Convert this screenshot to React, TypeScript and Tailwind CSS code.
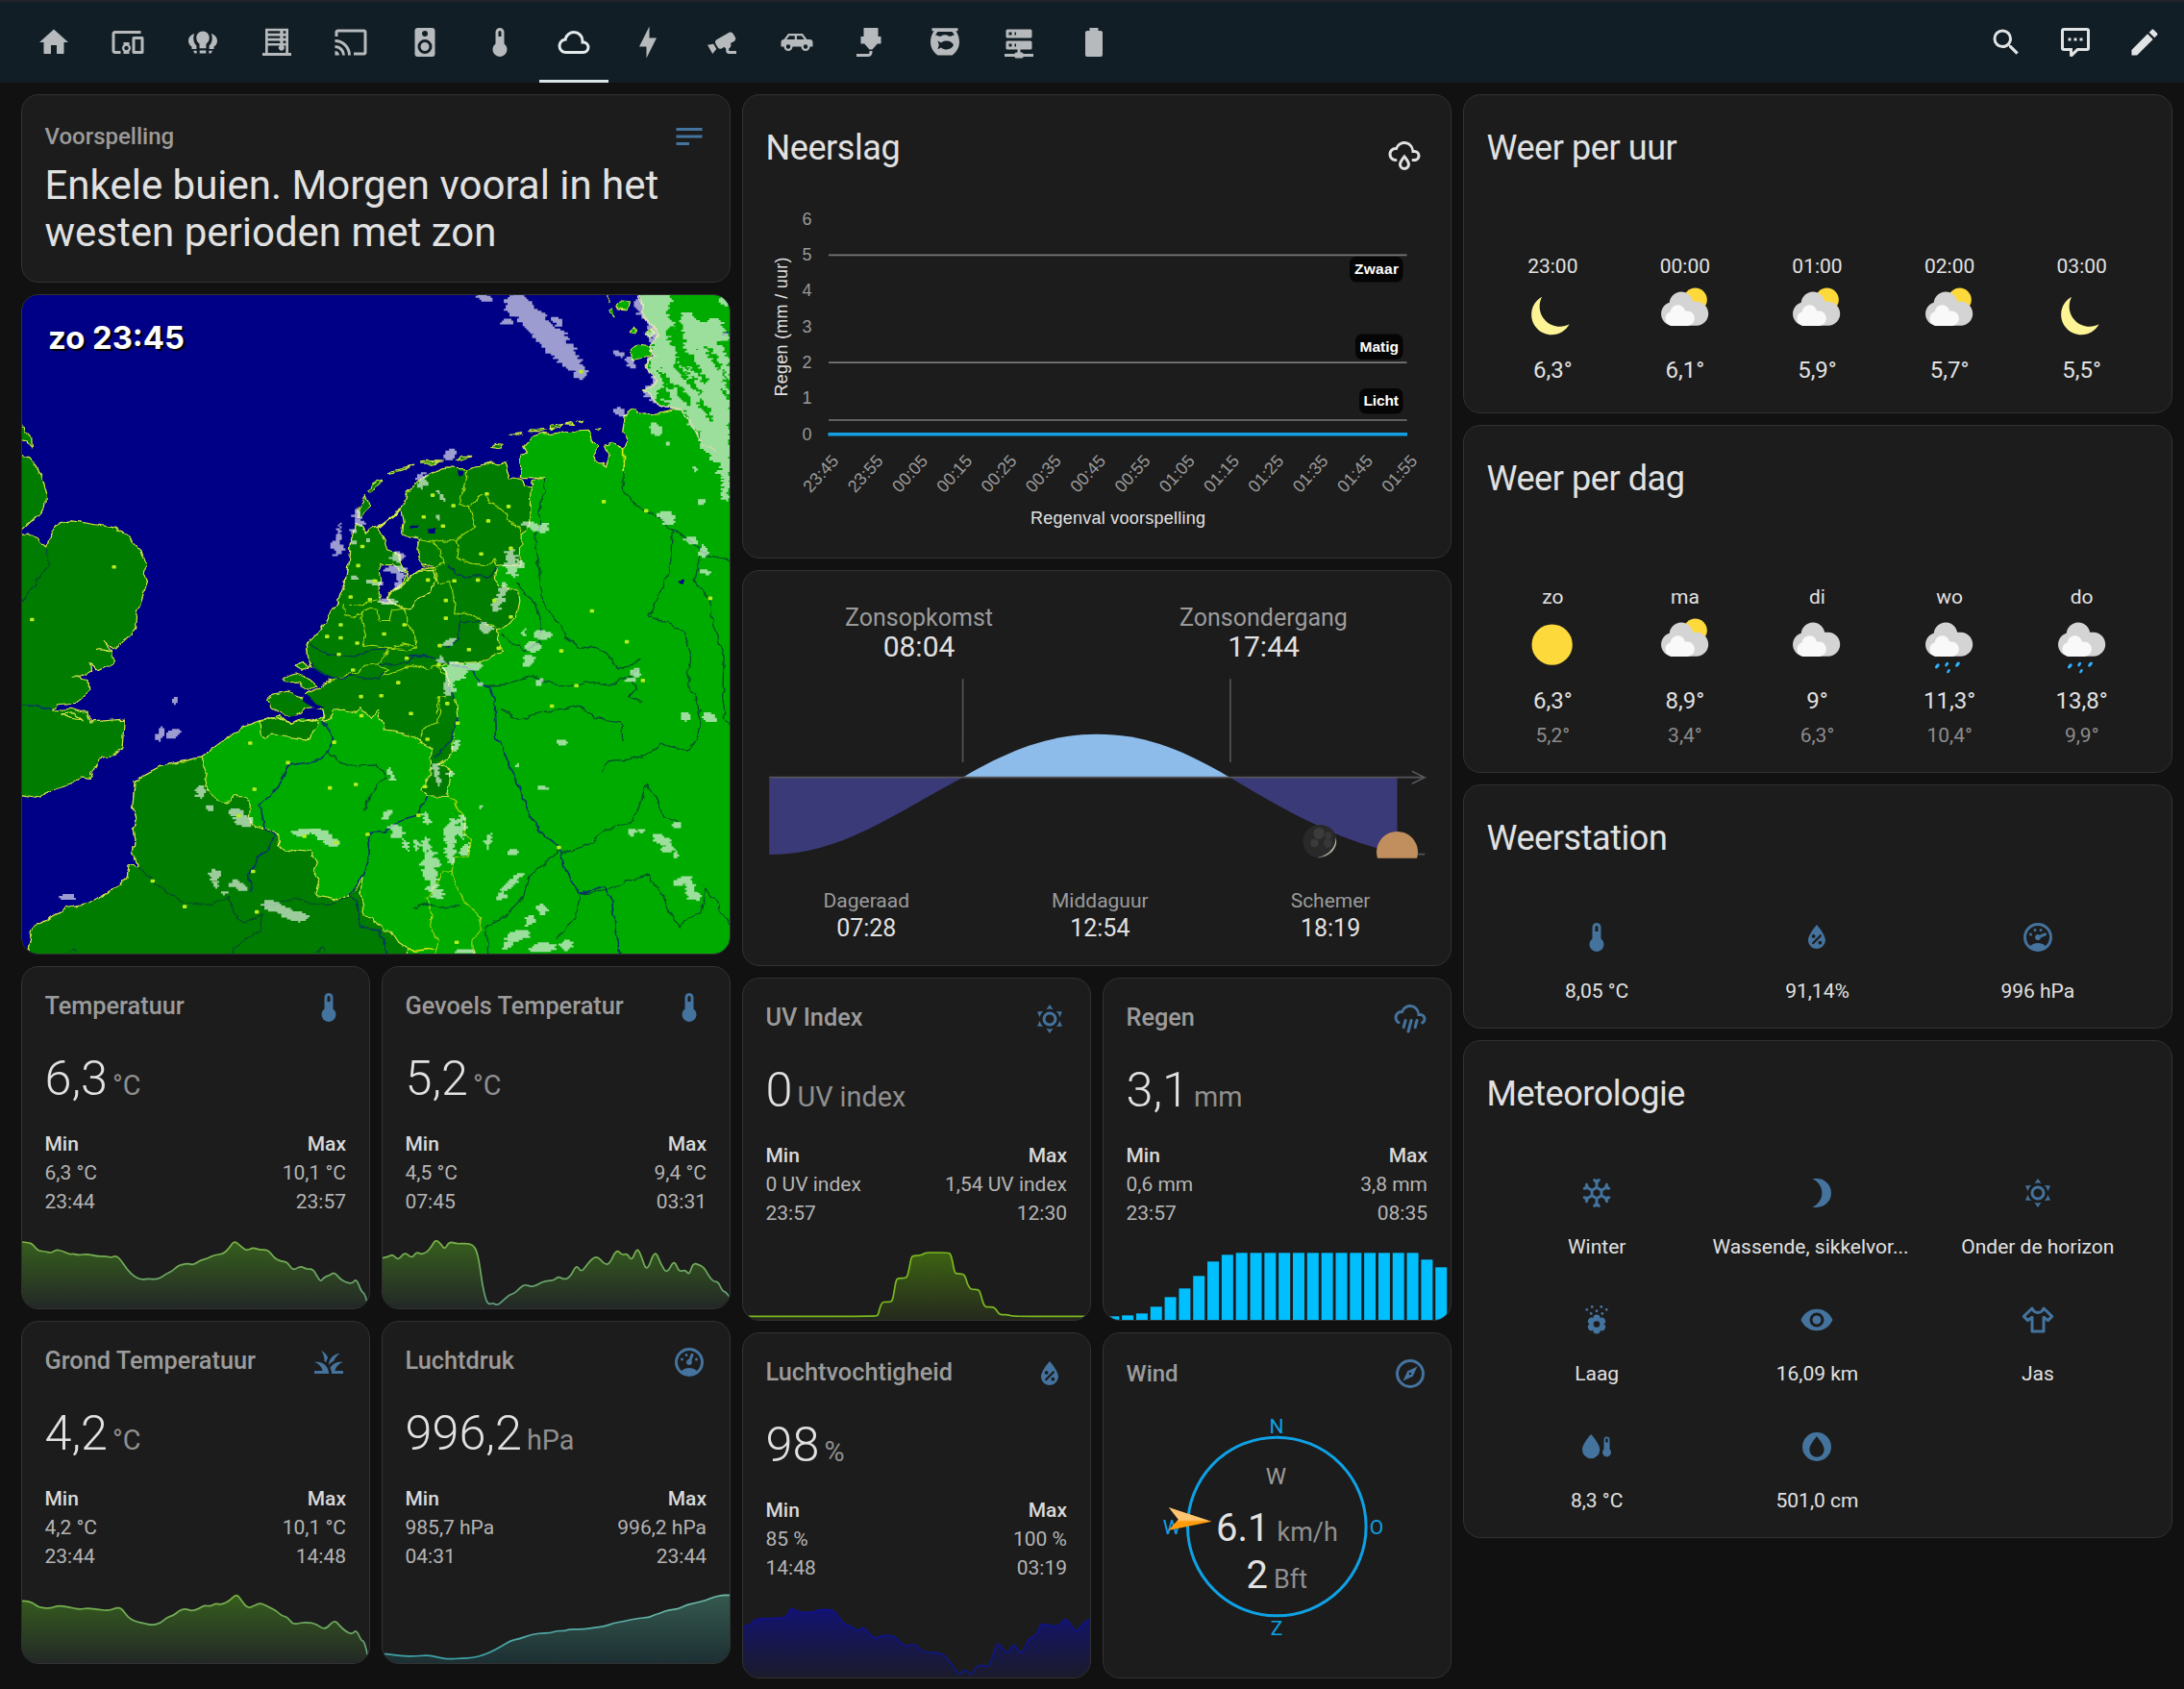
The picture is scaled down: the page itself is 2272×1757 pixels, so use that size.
import React from "react";

type Pt = [number, number];

const I = {
  home: "M10,20V14H14V20H19V12H22L12,3L2,12H5V20H10Z",
  devices:
    "M3 6H21V4H3C1.9 4 1 4.9 1 6V18C1 19.1 1.9 20 3 20H7V18H3V6M13 12H9V13.78C8.39 14.33 8 15.11 8 16C8 16.89 8.39 17.67 9 18.22V20H13V18.22C13.61 17.67 14 16.88 14 16S13.61 14.33 13 13.78V12M11 17.5C10.17 17.5 9.5 16.83 9.5 16S10.17 14.5 11 14.5 12.5 15.17 12.5 16 11.83 17.5 11 17.5M22 8H16C15.5 8 15 8.5 15 9V19C15 19.5 15.5 20 16 20H22C22.5 20 23 19.5 23 19V9C23 8.5 22.5 8 22 8M21 18H17V10H21V18Z",
  bulbs:
    "M12 4.3C9.4 4.3 7.5 6.4 7.5 8.9C7.5 11 8.6 12.3 9.7 13.2V16.2H14.3V13.2C15.4 12.3 16.5 11 16.5 8.9C16.5 6.4 14.6 4.3 12 4.3ZM9.8 17.6H14.2V19.6H9.8ZM6.2 6C3.8 6.7 2 8.6 2 11C2 12.8 2.9 14.2 4.3 15V16.6H7.6V14.4C6.2 13.1 5.5 11 5.5 9.3C5.5 8 5.8 6.8 6.2 6ZM5.4 17.8H7.8V19.6H6.2ZM17.8 6C20.2 6.7 22 8.6 22 11C22 12.8 21.1 14.2 19.7 15V16.6H16.4V14.4C17.8 13.1 18.5 11 18.5 9.3C18.5 8 18.2 6.8 17.8 6ZM18.6 17.8H16.2V19.6H17.8Z",
  blinds:
    "M4 2.5H20V19.3H22V21.3H2V19.3H4ZM5.8 4.2V5.8H14.2V4.2ZM5.8 7.6V9.2H14.2V7.6ZM5.8 11V12.6H14.2V11ZM5.8 14.4V19.3H18.2V14.4H16.4A1.9 1.9 0 1 1 14 14.4ZM16.4 4.2V5.8H18.2V4.2ZM16.4 7.6V9.2H18.2V7.6ZM16.4 11V12.6H18.2V11Z",
  cast: "M1,10V12A9,9 0 0,1 10,21H12C12,14.92 7.07,10 1,10M1,14V16A5,5 0 0,1 6,21H8A7,7 0 0,0 1,14M1,18V21H4A3,3 0 0,0 1,18M21,3H3C1.89,3 1,3.89 1,5V8H3V5H21V19H14V21H21A2,2 0 0,0 23,19V5C23,3.89 22.1,3 21,3Z",
  speaker:
    "M12,12A3,3 0 0,0 9,15A3,3 0 0,0 12,18A3,3 0 0,0 15,15A3,3 0 0,0 12,12M12,20A5,5 0 0,1 7,15A5,5 0 0,1 12,10A5,5 0 0,1 17,15A5,5 0 0,1 12,20M12,4A2,2 0 0,1 14,6A2,2 0 0,1 12,8C10.89,8 10,7.1 10,6C10,4.89 10.89,4 12,4M17,2H7C5.89,2 5,2.89 5,4V20A2,2 0 0,0 7,22H17A2,2 0 0,0 19,20V4C19,2.89 18.1,2 17,2Z",
  thermo: "M15 13V5A3 3 0 0 0 9 5V13A5 5 0 1 0 15 13M12 4A1 1 0 0 1 13 5V8H11V5A1 1 0 0 1 12 4Z",
  cloud:
    "M6.5 20Q4.22 20 2.61 18.43 1 16.85 1 14.58 1 12.63 2.17 11.1 3.35 9.57 5.25 9.15 5.88 6.85 7.75 5.43 9.63 4 12 4 14.93 4 16.96 6.04 19 8.07 19 11 20.73 11.2 21.86 12.5 23 13.78 23 15.5 23 17.38 21.69 18.69 20.38 20 18.5 20M6.5 18H18.5Q19.55 18 20.27 17.27 21 16.55 21 15.5 21 14.45 20.27 13.73 19.55 13 18.5 13H17V11Q17 8.93 15.54 7.46 14.08 6 12 6 9.93 6 8.46 7.46 7 8.93 7 11H6.5Q5.05 11 4.03 12.03 3 13.05 3 14.5 3 15.95 4.03 17 5.05 18 6.5 18Z",
  bolt: "M11 15H6L13 1V9H18L11 23V15Z",
  cctv: "M18.15,4.94C17.77,4.91 17.37,5 17,5.2L8.35,10.2C7.39,10.76 7.07,12 7.62,12.94L9.12,15.53C9.67,16.5 10.89,16.82 11.85,16.27L13.65,15.23C13.92,15.69 14.32,16.06 14.81,16.27V18.04C14.81,19.13 15.7,20 16.81,20H22V18.04H16.81V16.27C17.72,15.87 18.31,14.97 18.31,14C18.31,13.54 18.19,13.11 17.97,12.73L20.5,11.27C21.47,10.71 21.8,9.5 21.24,8.53L19.74,5.94C19.4,5.34 18.79,5 18.15,4.94M6.22,13.17L2,13.87L2.75,15.17L4.75,18.63L5.5,19.93L8.22,16.63L6.22,13.17Z",
  car: "M16,6L19,10H21C22.11,10 23,10.89 23,12V15H21A3,3 0 0,1 18,18A3,3 0 0,1 15,15H9A3,3 0 0,1 6,18A3,3 0 0,1 3,15H1V12C1,10.89 1.89,10 3,10L6,6H16M10.5,7.5H6.75L4.86,10H10.5V7.5M12,7.5V10H17.14L15.25,7.5H12M6,13.5A1.5,1.5 0 0,0 4.5,15A1.5,1.5 0 0,0 6,16.5A1.5,1.5 0 0,0 7.5,15A1.5,1.5 0 0,0 6,13.5M18,13.5A1.5,1.5 0 0,0 16.5,15A1.5,1.5 0 0,0 18,16.5A1.5,1.5 0 0,0 19.5,15A1.5,1.5 0 0,0 18,13.5Z",
  nozzle:
    "M7,2H17V8H19V13H16.5L13,17H11L7.5,13H5V8H7V2M10,22H2V20H10A1,1 0 0,0 11,19V18H13V19A3,3 0 0,1 10,22Z",
  fishbowl:
    "M3 2.2H21V4.2H19.6C21.1 6.2 22 9 22 11.8C22 15.6 20 18.8 17 21H7C4 18.8 2 15.6 2 11.8C2 9 2.9 6.2 4.4 4.2H3ZM7 4.6L5.3 7C7 6.6 7.8 8.6 9.4 7.6C11 6.6 13 6.6 14.6 7.6C16.2 8.6 17 6.6 18.7 7L17 4.6ZM7 11L9.4 12.3C10.4 11.4 11.8 11 13.2 11C15.6 11 17.4 12.4 18 13.9C17.4 15.6 15.6 17 13.2 17C11.8 17 10.4 16.5 9.4 15.6L7 16.9L7.9 13.9Z",
  server:
    "M13,19H14A1,1 0 0,1 15,20H22V22H15A1,1 0 0,1 14,23H10A1,1 0 0,1 9,22H2V20H9A1,1 0 0,1 10,19H11V17H4A1,1 0 0,1 3,16V12A1,1 0 0,1 4,11H20A1,1 0 0,1 21,12V16A1,1 0 0,1 20,17H13V19M4,3H20A1,1 0 0,1 21,4V8A1,1 0 0,1 20,9H4A1,1 0 0,1 3,8V4A1,1 0 0,1 4,3M9,7H10V5H9V7M9,15H10V13H9V15M5,5V7H7V5H5M5,13V15H7V13H5Z",
  battery:
    "M16.67,4H15V2H9V4H7.33A1.33,1.33 0 0,0 6,5.33V20.67C6,21.4 6.6,22 7.33,22H16.67A1.33,1.33 0 0,0 18,20.67V5.33C18,4.6 17.4,4 16.67,4Z",
  search:
    "M9.5,3A6.5,6.5 0 0,1 16,9.5C16,11.11 15.41,12.59 14.44,13.73L14.71,14H15.5L20.5,19L19,20.5L14,15.5V14.71L13.73,14.44C12.59,15.41 11.11,16 9.5,16A6.5,6.5 0 0,1 3,9.5A6.5,6.5 0 0,1 9.5,3M9.5,5C7,5 5,7 5,9.5C5,12 7,14 9.5,14C12,14 14,12 14,9.5C14,7 12,5 9.5,5Z",
  comment:
    "M9,22A1,1 0 0,1 8,21V18H4A2,2 0 0,1 2,16V4C2,2.89 2.9,2 4,2H20A2,2 0 0,1 22,4V16A2,2 0 0,1 20,18H13.9L10.2,21.71C10,21.9 9.75,22 9.5,22H9M10,16V19.08L13.08,16H20V4H4V16H10M17,11H15V9H17V11M13,11H11V9H13V11M9,11H7V9H9V11Z",
  pencil:
    "M20.71,7.04C21.1,6.65 21.1,6 20.71,5.63L18.37,3.29C18,2.9 17.35,2.9 16.96,3.29L15.12,5.12L18.87,8.87M3,17.25V21H6.75L17.81,9.93L14.06,6.18L3,17.25Z",
  text: "M21,6V8H3V6H21M3,18H12V16H3V18M3,13H21V11H3V13Z",
  rainy:
    "M6,14.03A1,1 0 0,1 7,15.03C7,15.58 6.55,16.03 6,16.03C3.24,16.03 1,13.79 1,11.03C1,8.27 3.24,6.03 6,6.03C7,3.68 9.3,2.03 12,2.03C15.43,2.03 18.24,4.69 18.5,8.06L19,8.03A4,4 0 0,1 23,12.03C23,14.23 21.21,16.03 19,16.03H18C17.45,16.03 17,15.58 17,15.03C17,14.47 17.45,14.03 18,14.03H19A2,2 0 0,0 21,12.03A2,2 0 0,0 19,10.03H17V9.03C17,6.27 14.76,4.03 12,4.03C9.5,4.03 7.45,5.84 7.06,8.21C6.73,8.09 6.37,8.03 6,8.03A3,3 0 0,0 3,11.03A3,3 0 0,0 6,14.03M12,14.15C12.18,14.39 12.37,14.66 12.56,14.94C13,15.56 14,17.03 14,18C14,19.11 13.1,20 12,20A2,2 0 0,1 10,18C10,17.03 11,15.56 11.44,14.94C11.63,14.66 11.82,14.4 12,14.15M12,11.03L11.5,11.59C11.5,11.59 10.65,12.55 9.79,13.81C8.93,15.06 8,16.56 8,18A4,4 0 0,0 12,22A4,4 0 0,0 16,18C16,16.56 15.07,15.06 14.21,13.81C13.35,12.55 12.5,11.59 12.5,11.59",
  pouring:
    "M9,12C9.53,12.14 9.85,12.69 9.71,13.22L8.41,18.05C8.27,18.59 7.72,18.9 7.19,18.76C6.65,18.62 6.34,18.07 6.48,17.54L7.78,12.71C7.92,12.17 8.47,11.86 9,12M13,12C13.53,12.14 13.85,12.69 13.71,13.22L11.64,20.95C11.5,21.5 10.95,21.8 10.41,21.66C9.88,21.5 9.56,20.97 9.7,20.43L11.78,12.71C11.92,12.17 12.47,11.86 13,12M17,12C17.53,12.14 17.85,12.69 17.71,13.22L16.41,18.05C16.27,18.59 15.72,18.9 15.19,18.76C14.65,18.62 14.34,18.07 14.48,17.54L15.78,12.71C15.92,12.17 16.47,11.86 17,12M17,10V9A5,5 0 0,0 12,4C9.5,4 7.45,5.82 7.06,8.19C6.73,8.07 6.37,8 6,8A3,3 0 0,0 3,11C3,12.11 3.6,13.08 4.5,13.6V13.59C5,13.87 5.14,14.5 4.87,14.96C4.59,15.43 4,15.6 3.5,15.32V15.33C2,14.47 1,12.85 1,11A5,5 0 0,1 6,6C7,3.65 9.3,2 12,2C15.43,2 18.24,4.66 18.5,8.03L19,8A4,4 0 0,1 23,12C23,13.5 22.2,14.77 21,15.46C20.5,15.73 19.91,15.57 19.63,15.09C19.36,14.61 19.5,14 20,13.72V13.73C20.6,13.39 21,12.74 21,12A2,2 0 0,0 19,10H17Z",
  sunny:
    "M12,7A5,5 0 0,1 17,12A5,5 0 0,1 12,17A5,5 0 0,1 7,12A5,5 0 0,1 12,7M12,9A3,3 0 0,0 9,12A3,3 0 0,0 12,15A3,3 0 0,0 15,12A3,3 0 0,0 12,9M12,2L14.39,5.42C13.65,5.15 12.84,5 12,5C11.16,5 10.35,5.15 9.61,5.42L12,2M3.34,7L7.5,6.65C6.9,7.16 6.36,7.78 5.94,8.5C5.5,9.24 5.25,10 5.11,10.79L3.34,7M3.36,17L5.12,13.23C5.26,14 5.53,14.78 5.95,15.5C6.37,16.24 6.91,16.86 7.5,17.37L3.36,17M20.65,7L18.88,10.79C18.74,10 18.47,9.23 18.05,8.5C17.63,7.78 17.1,7.15 16.5,6.64L20.65,7M20.64,17L16.5,17.36C17.09,16.85 17.62,16.22 18.04,15.5C18.46,14.77 18.73,14 18.87,13.21L20.64,17M12,22L9.59,18.56C10.33,18.83 11.14,19 12,19C12.82,19 13.63,18.83 14.37,18.56L12,22Z",
  grass:
    "M12 20H2V18H7.75C7 15.19 4.81 12.9 2 12.04C2.62 11.87 3.3 11.77 4 11.77C8.42 11.77 12 15.35 12 19.77V20M22 12.04C21.39 11.87 20.71 11.77 20 11.77C16.93 11.77 14.26 13.5 12.92 16C13.64 17.26 14 18.6 14 19.77V20H22V18H16.25C17 15.19 19.19 12.9 22 12.04M15.64 11C16.42 8.93 17.87 7.18 19.73 6C15.44 6.16 12 9.67 12 14C12.95 12.75 14.2 11.72 15.64 11M11.42 8.85C10.58 6.66 8.88 4.89 6.7 4C8.14 5.86 9 8.18 9 10.71C9 10.92 8.97 11.12 8.96 11.32C9.39 11.56 9.79 11.84 10.18 12.14C10.39 10.96 10.83 9.85 11.42 8.85Z",
  gauge:
    "M12,2A10,10 0 0,0 2,12A10,10 0 0,0 12,22A10,10 0 0,0 22,12A10,10 0 0,0 12,2M12,4A8,8 0 0,1 20,12C20,14.4 19,16.5 17.3,18C15.9,16.7 14,16 12,16C10,16 8.2,16.7 6.7,18C5,16.5 4,14.4 4,12A8,8 0 0,1 12,4M14,5.89C13.62,5.9 13.26,6.15 13.1,6.54L11.81,9.77L11.71,10C11,10.13 10.41,10.6 10.14,11.26C9.73,12.29 10.23,13.45 11.26,13.86C12.29,14.27 13.45,13.77 13.86,12.74C14.12,12.08 14,11.32 13.57,10.76L13.67,10.5L14.96,7.29L14.97,7.26C15.17,6.75 14.92,6.17 14.41,5.96C14.28,5.91 14.15,5.89 14,5.89M10,6A1,1 0 0,0 9,7A1,1 0 0,0 10,8A1,1 0 0,0 11,7A1,1 0 0,0 10,6M7,9A1,1 0 0,0 6,10A1,1 0 0,0 7,11A1,1 0 0,0 8,10A1,1 0 0,0 7,9M17,9A1,1 0 0,0 16,10A1,1 0 0,0 17,11A1,1 0 0,0 18,10A1,1 0 0,0 17,9Z",
  gaugeRight:
    "M12,2A10,10 0 0,0 2,12A10,10 0 0,0 12,22A10,10 0 0,0 22,12A10,10 0 0,0 12,2M12,4A8,8 0 0,1 20,12C20,14.4 19,16.5 17.3,18C15.9,16.7 14,16 12,16C10,16 8.2,16.7 6.7,18C5,16.5 4,14.4 4,12A8,8 0 0,1 12,4M10,6A1,1 0 0,0 9,7A1,1 0 0,0 10,8A1,1 0 0,0 11,7A1,1 0 0,0 10,6M14,6A1,1 0 0,0 13,7A1,1 0 0,0 14,8A1,1 0 0,0 15,7A1,1 0 0,0 14,6M17.09,8.94C16.96,8.94 16.84,8.97 16.7,9L13.5,10.32L13.23,10.43C12.67,10 11.91,9.88 11.25,10.15C10.23,10.56 9.73,11.73 10.15,12.75C10.56,13.77 11.73,14.27 12.75,13.85C13.41,13.59 13.88,13 14,12.28L14.23,12.18L17.45,10.88L17.47,10.87C18,10.66 18.23,10.08 18.03,9.56C17.87,9.18 17.5,8.93 17.09,8.94M7,9A1,1 0 0,0 6,10A1,1 0 0,0 7,11A1,1 0 0,0 8,10A1,1 0 0,0 7,9Z",
  waterPercent:
    "M12,3.25C12,3.25 6,10 6,14C6,17.32 8.69,20 12,20A6,6 0 0,0 18,14C18,10 12,3.25 12,3.25M14.47,9.97L15.53,11.03L9.53,17.03L8.47,15.97M9.75,10A1.25,1.25 0 0,1 11,11.25A1.25,1.25 0 0,1 9.75,12.5A1.25,1.25 0 0,1 8.5,11.25A1.25,1.25 0 0,1 9.75,10M14.25,14.5A1.25,1.25 0 0,1 15.5,15.75A1.25,1.25 0 0,1 14.25,17A1.25,1.25 0 0,1 13,15.75A1.25,1.25 0 0,1 14.25,14.5Z",
  compass:
    "M7,17L10.2,10.2L17,7L13.8,13.8L7,17M12,11.1A0.9,0.9 0 0,0 11.1,12A0.9,0.9 0 0,0 12,12.9A0.9,0.9 0 0,0 12.9,12A0.9,0.9 0 0,0 12,11.1M12,2A10,10 0 0,1 22,12A10,10 0 0,1 12,22A10,10 0 0,1 2,12A10,10 0 0,1 12,2M12,4A8,8 0 0,0 4,12A8,8 0 0,0 12,20A8,8 0 0,0 20,12A8,8 0 0,0 12,4Z",
  crescent: "M9 2.2C10 2 11 2 12 2A10 10 0 0 1 12 22C11 22 10 22 9 21.8C13 20 15.6 16.3 15.6 12S13 4 9 2.2Z",
  eye: "M12,9A3,3 0 0,0 9,12A3,3 0 0,0 12,15A3,3 0 0,0 15,12A3,3 0 0,0 12,9M12,17A5,5 0 0,1 7,12A5,5 0 0,1 12,7A5,5 0 0,1 17,12A5,5 0 0,1 12,17M12,4.5C7,4.5 2.73,7.61 1,12C2.73,16.39 7,19.5 12,19.5C17,19.5 21.27,16.39 23,12C21.27,7.61 17,4.5 12,4.5Z",
  waterThermo:
    "M8.1 3.3C8.1 3.3 2 9.7 2 14A6.1 6.1 0 0 0 14.2 14C14.2 9.7 8.1 3.3 8.1 3.3ZM21 13.7V7A2 2 0 0 0 17 7V13.7A3 3 0 1 0 21 13.7ZM19 6.2A.8 .8 0 0 1 19.8 7V9H18.2V7A.8 .8 0 0 1 19 6.2Z",
  waterCircle:
    "M12 2A10 10 0 1 0 12 22A10 10 0 1 0 12 2ZM12 4.8C12 4.8 17.1 10.3 17.1 14A5.1 5.1 0 0 1 6.9 14C6.9 10.3 12 4.8 12 4.8Z",
};

function Icon({ d, className = "" }: { d: string; className?: string }) {
  return (
    <svg viewBox="0 0 24 24" className={`size-9 shrink-0 fill-current ${className}`}>
      <path d={d} fillRule="evenodd" />
    </svg>
  );
}

function Snowflake() {
  return (
    <svg viewBox="0 0 24 24" className="size-9 fill-none stroke-current" strokeWidth="1.9" strokeLinecap="round">
      {[0, 60, 120, 180, 240, 300].map((a) => (
        <path key={a} transform={`rotate(${a} 12 12)`} d="M12 8.2V3.4M10.4 3L12 4.8L13.6 3M12 8.2L15.3 10.1" />
      ))}
    </svg>
  );
}

function Pollen() {
  const dots: Pt[] = [[5.2, 4.9], [8.8, 3], [15.2, 3], [18.8, 4.9], [12, 5.8], [8.1, 7.6], [15.9, 7.6]];
  return (
    <svg viewBox="0 0 24 24" className="size-9 fill-current">
      {dots.map(([x, y]) => (
        <circle key={`${x}-${y}`} cx={x} cy={y} r="0.95" />
      ))}
      {[0, 60, 120, 180, 240, 300].map((a) => (
        <circle key={a} cx="12" cy="10.9" r="2.5" transform={`rotate(${a} 12 15)`} />
      ))}
      <circle cx="12" cy="15" r="4.2" />
      <circle cx="12" cy="15" r="2.2" className="fill-[#1c1c1c]" />
    </svg>
  );
}

function Shirt() {
  return (
    <svg viewBox="0 0 24 24" className="size-9 fill-none stroke-current" strokeWidth="2" strokeLinejoin="round">
      <path d="M8 4L2.2 9.6L5 12.4L8 10.2V20H16V10.2L19 12.4L21.8 9.6L16 4C15.2 6 13.8 7 12 7S8.8 6 8 4Z" />
    </svg>
  );
}

const CLOUD_BACK =
  "m3.8863 5.035c-0.54892 0.16898-1.04 0.46637-1.4372 0.8636-0.63077 0.63041-1.0206 1.4933-1.0206 2.455 0 1.9251 1.5589 3.4682 3.4837 3.4682h6.9688c1.9251 0 3.484-1.5981 3.484-3.5232 0-1.9251-1.5589-3.5232-3.484-3.5232h-1.0834c-0.25294-1.6916-1.6986-2.9083-3.4463-2.9083-1.7995 0-3.2805 1.4153-3.465 3.1679";
const CLOUD_FRONT =
  "m4.1996 7.6995c-0.33902 0.10407-0.64276 0.28787-0.88794 0.5334-0.39017 0.38982-0.63147 0.92322-0.63147 1.5176 0 1.1896 0.96414 2.1431 2.1537 2.1431h4.3071c1.1896 0 2.153-0.98742 2.153-2.1777 0-1.1896-0.96344-2.1777-2.153-2.1777h-0.66992c-0.15593-1.0449-1.0499-1.7974-2.1297-1.7974-1.112 0-2.0274 0.87524-2.1417 1.9586";
const MOON =
  "m 13.502891,11.382935 c -1.011285,1.859223 -2.976664,3.121381 -5.2405751,3.121381 -3.289929,0 -5.953329,-2.663833 -5.953329,-5.9537625 0,-2.263911 1.261724,-4.228856 3.120948,-5.240575 -0.452782,0.842738 -0.712753,1.806363 -0.712753,2.832381 0,3.289928 2.663833,5.9533275 5.9533291,5.9533275 1.026017,0 1.989641,-0.259969 2.83238,-0.712752";

function Weather({ kind }: { kind: string }) {
  const cloudy = kind === "partly" || kind === "cloudy" || kind === "rain";
  const drops: [number, number, number][] = [[4.9, 14.7, 1], [7.7, 14.2, 0.85], [10.9, 14.2, 1], [8.2, 16.2, 0.8]];
  return (
    <svg viewBox="0 0 17 17" className="size-[60px]">
      {kind === "moon" && <path d={MOON} className="fill-[#fdf495]" />}
      {kind === "sun" && <circle cx="8.4" cy="8.4" r="6" className="fill-[#fdd93c]" />}
      {kind === "partly" && <circle cx="11.5" cy="4.2" r="3.48" className="fill-[#fdd93c]" />}
      {cloudy && <path d={CLOUD_BACK} className="fill-[#d4d4d4]" />}
      {cloudy && <path d={CLOUD_FRONT} className="fill-[#f9f9f9]" />}
      {kind === "rain" &&
        drops.map(([x, y, s]) => (
          <ellipse key={x} cx="0" cy="0" rx="0.48" ry="0.85" className="fill-[#30b3ff]" transform={`translate(${x} ${y}) rotate(35) scale(${s})`} />
        ))}
    </svg>
  );
}

function Card({ className = "", children }: { className?: string; children?: React.ReactNode }) {
  return (
    <div className={`overflow-hidden rounded-[18px] border border-[#323232] bg-[#1c1c1c] ${className}`}>{children}</div>
  );
}

/** Rounds the corners of a polyline by running quadratics through the midpoints. */
function smooth(p: Pt[]) {
  let d = `M${p[0][0]},${p[0][1]}`;
  for (let i = 1; i < p.length - 1; i++) {
    d += ` Q${p[i][0]},${p[i][1]} ${(p[i][0] + p[i + 1][0]) / 2},${(p[i][1] + p[i + 1][1]) / 2}`;
  }
  const l = p[p.length - 1];
  return `${d} L${l[0]},${l[1]}`;
}

function parse(s: string): Pt[] {
  return s.split(" ").map((q) => q.split(",").map(Number) as Pt);
}

type Graph = { box: [number, number, number, number]; pts: string; stroke: [string, string]; fill: [string, string] };

function Spark({ id, graph }: { id: string; graph: Graph }) {
  const [x, y, w, h] = graph.box;
  const pts = parse(graph.pts);
  const line = smooth(pts);
  const top = Math.min(...pts.map((q) => q[1]));
  return (
    <svg viewBox={`${x} ${y} ${w} ${h}`} preserveAspectRatio="none" className="mt-auto block h-24 w-full">
      <defs>
        <linearGradient id={`${id}s`} gradientUnits="userSpaceOnUse" x1="0" x2="0" y1={top} y2={y + h}>
          <stop offset="0" stopColor={graph.stroke[0]} />
          <stop offset="1" stopColor={graph.stroke[1]} />
        </linearGradient>
        <linearGradient id={`${id}f`} gradientUnits="userSpaceOnUse" x1="0" x2="0" y1={top} y2={y + h}>
          <stop offset="0" stopColor={graph.fill[0]} />
          <stop offset="1" stopColor={graph.fill[1]} />
        </linearGradient>
      </defs>
      <path d={`${line} L${x + w},${y + h} L${x},${y + h} Z`} fill={`url(#${id}f)`} />
      <path d={line} fill="none" stroke={`url(#${id}s)`} strokeWidth="1.7" vectorEffect="non-scaling-stroke" />
    </svg>
  );
}

function Bars() {
  const tops = [1080, 1077, 1071, 1050, 1020, 993, 954, 909, 888, ...Array(13).fill(882), 903, 927];
  return (
    <svg viewBox="793 803 754 288" preserveAspectRatio="none" className="mt-auto block h-24 w-full">
      {tops.map((t, i) => (
        <rect key={i} x={802 + 30.96 * i} y={t} width="25" height={1091 - t} className="fill-[#00bfff]" />
      ))}
    </svg>
  );
}

type SensorProps = {
  id: string; title: string; icon: string; value: string; unit: string;
  min: [string, string]; max: [string, string]; graph?: Graph; h?: string;
};

function Sensor({ id, title, icon, value, unit, min, max, graph, h = "h-[357px]" }: SensorProps) {
  return (
    <Card className={`flex flex-col pt-[23px] ${h}`}>
      <div className="flex h-9 items-center justify-between pl-[23.5px] pr-6">
        <span className="text-[25.3px] font-medium leading-9 text-[#9b9b9b]">{title}</span>
        <Icon d={icon} className="mt-0.5 text-[#44739e]" />
      </div>
      <div className="mt-[27px] flex h-[60px] items-baseline pl-[23.5px] pr-6">
        <span className="text-[50.4px] font-light leading-[60px] text-[#e1e1e1]">{value}</span>
        <span className="ml-[5px] text-[28.8px] text-[#8f8f8f]">{unit}</span>
      </div>
      <div className="mt-[23px] flex justify-between pl-[23.5px] pr-6 text-[21px] leading-[30px] text-[#b4b4b4]">
        <div>
          <p className="font-medium text-[#d9d9d9]">Min</p>
          <p>{min[0]}</p>
          <p>{min[1]}</p>
        </div>
        <div className="text-right">
          <p className="font-medium text-[#d9d9d9]">Max</p>
          <p>{max[0]}</p>
          <p>{max[1]}</p>
        </div>
      </div>
      {graph ? <Spark id={id} graph={graph} /> : <Bars />}
    </Card>
  );
}

const GREEN: { stroke: [string, string]; fill: [string, string] } = {
  stroke: ["#7cb342", "#5f9d86"],
  fill: ["#365f1d", "#232826"],
};

const sensors: Record<string, SensorProps> = {
  temp: {
    id: "temp", title: "Temperatuur", icon: I.thermo, value: "6,3", unit: "°C", min: ["6,3 °C", "23:44"], max: ["10,1 °C", "23:57"],
    graph: {
      ...GREEN, box: [46, 797, 738, 288],
      pts: "46,878 60,880 68,884 80,906 95,907 107,913 118,902 130,905 148,917 155,914 165,919 185,915 205,923 225,922 235,927 245,921 254,930 270,965 285,987 300,996 315,992 325,995 340,991 352,977 365,969 375,955 385,948 400,945 410,950 425,935 440,930 455,918 473,916 485,900 497,874 508,887 523,906 537,895 550,902 570,903 582,928 595,938 610,940 622,968 638,952 652,964 665,961 680,1004 688,988 700,982 710,972 722,993 735,1004 748,1008 757,992 767,1032 775,1040 782,1080",
    },
  },
  feels: {
    id: "feels", title: "Gevoels Temperatur", icon: I.thermo, value: "5,2", unit: "°C", min: ["4,5 °C", "07:45"], max: ["9,4 °C", "03:31"],
    graph: {
      ...GREEN, box: [808, 797, 738, 288],
      pts: "808,928 820,924 830,916 841,936 855,908 870,930 880,908 890,917 902,910 912,892 921,870 932,884 940,902 950,876 965,884 985,882 1000,886 1008,905 1014,945 1020,1010 1028,1062 1035,1073 1043,1068 1052,1076 1065,1060 1078,1042 1090,1038 1100,1020 1112,1010 1122,1018 1135,1014 1148,1002 1160,999 1172,998 1182,985 1194,996 1208,986 1220,948 1230,972 1240,955 1252,932 1265,922 1277,944 1290,950 1305,900 1318,920 1328,913 1338,938 1349,895 1358,920 1370,974 1387,900 1400,948 1413,978 1428,932 1438,972 1452,964 1460,982 1468,944 1480,948 1492,958 1502,985 1512,1002 1522,1002 1530,1030 1538,1034 1546,1050",
    },
  },
  ground: {
    id: "ground", title: "Grond Temperatuur", icon: I.grass, value: "4,2", unit: "°C", min: ["4,2 °C", "23:44"], max: ["10,1 °C", "14:48"],
    graph: {
      ...GREEN, box: [46, 794, 738, 288],
      pts: "46,888 65,889 80,908 105,912 122,902 145,907 168,915 185,910 210,916 232,918 245,910 257,910 270,938 285,952 305,958 322,964 340,958 355,938 368,934 380,918 393,912 407,920 422,912 433,902 447,905 457,896 470,900 487,888 502,866 512,885 525,912 540,902 553,894 572,908 588,920 598,935 610,938 622,962 640,956 655,955 672,960 690,980 710,946 722,967 735,984 748,992 757,978 767,1012 774,1015 781,1060",
    },
  },
  pressure: {
    id: "pressure", title: "Luchtdruk", icon: I.gauge, value: "996,2", unit: "hPa", min: ["985,7 hPa", "04:31"], max: ["996,2 hPa", "23:44"],
    graph: {
      stroke: ["#6fb8a4", "#3aa0a8"], fill: ["#35594e", "#1d2f33"], box: [808, 794, 738, 288],
      pts: "812,1053 840,1058 870,1062 905,1057 930,1066 950,1070 975,1067 1000,1066 1025,1056 1045,1042 1060,1030 1080,1012 1100,1006 1120,995 1140,989 1165,988 1180,981 1195,982 1205,976 1235,977 1255,972 1280,968 1300,957 1320,952 1350,942 1375,940 1385,932 1400,926 1415,916 1435,914 1455,900 1475,894 1495,886 1510,877 1530,870 1546,870",
    },
  },
  uv: {
    id: "uv", title: "UV Index", icon: I.sunny, value: "0", unit: "UV index", min: ["0 UV index", "23:57"], max: ["1,54 UV index", "12:30"],
    graph: {
      stroke: ["#7cb820", "#7cb820"], fill: ["#3d6312", "#25291d"], box: [15, 803, 753, 288],
      pts: "15,1080 150,1080 275,1080 304,1079 308,1076 312,1052 317,1036 322,1035 334,1035 339,1031 342,1010 347,966 352,961 366,961 371,957 375,935 380,895 385,891 400,890 406,886 412,881 430,881 458,881 465,884 469,905 474,944 479,947 492,948 497,954 502,980 508,994 513,996 524,996 529,1002 534,1030 539,1049 545,1051 558,1051 564,1058 570,1073 578,1075 590,1075 600,1080 680,1080 768,1080",
    },
  },
  rain: {
    id: "rain", title: "Regen", icon: I.pouring, value: "3,1", unit: "mm", min: ["0,6 mm", "23:57"], max: ["3,8 mm", "08:35"],
  },
  humid: {
    id: "humid", title: "Luchtvochtigheid", icon: I.waterPercent, value: "98", unit: "%", min: ["85 %", "14:48"], max: ["100 %", "03:19"],
    h: "h-[360px]",
    graph: {
      stroke: ["#10108e", "#0c1a80"], fill: ["#121272", "#1b1b2c"], box: [15, 810, 753, 288],
      pts: "15,940 28,938 40,918 50,914 105,914 112,900 121,878 132,895 170,895 176,886 208,886 215,895 225,915 237,936 250,937 262,955 275,940 288,960 302,980 312,967 343,967 355,988 370,1003 385,990 405,1020 448,1022 458,1040 470,1062 484,1092 497,1070 510,1094 520,1066 530,1058 548,1067 558,1025 567,986 577,1008 590,1026 602,988 616,1024 625,1012 635,975 650,970 662,926 680,938 702,937 714,910 728,938 739,958 750,932 768,916",
    },
  },
};

function Tabs() {
  const tabs = [I.home, I.devices, I.bulbs, I.blinds, I.cast, I.speaker, I.thermo, I.cloud, I.bolt, I.cctv, I.car, I.nozzle, I.fishbowl, I.server, I.battery];
  return (
    <header className="flex h-[86px] items-stretch justify-between border-t-2 border-[#23232b] bg-[#121e25] pl-[17.4px] pr-[5px]">
      <nav className="flex">
        {tabs.map((d, i) => (
          <div key={i} className="relative flex w-[77.25px] items-center justify-center text-[#b6babc]">
            <Icon d={d} className={i === 7 ? "text-[#e3eaec]" : ""} />
            {i === 7 && <div className="absolute bottom-0 h-[3px] w-[72px] bg-[#dbe5e8]" />}
          </div>
        ))}
      </nav>
      <div className="flex items-center text-[#e1e4e5]">
        {[I.search, I.comment, I.pencil].map((d) => (
          <div key={d} className="flex w-[72px] justify-center">
            <Icon d={d} />
          </div>
        ))}
      </div>
    </header>
  );
}

/** Row-by-row outline of a radar echo, with uneven row ends; the seed keeps each one stable. */
function echo(cx: number, cy: number, rx: number, ry: number, rot: number, seed: number) {
  let s = seed * 9301 + 49297;
  const rnd = () => {
    s = (s * 9301 + 49297) % 233280;
    return s / 233280;
  };
  rnd();
  const a = (rot * Math.PI) / 180;
  const c = Math.cos(a);
  const n = Math.sin(a);
  const A = (c * c) / (rx * rx) + (n * n) / (ry * ry);
  const B = c * n * (1 / (rx * rx) - 1 / (ry * ry));
  const C = (n * n) / (rx * rx) + (c * c) / (ry * ry);
  const top = Math.sqrt(A / (A * C - B * B));
  const step = 4.4;
  const jag = Math.min(15, 4 + (rx + ry) / 4);
  let d = "";
  let l = 0;
  let r = 0;
  for (let y = -top; y < top; y += step) {
    const m = y + step / 2;
    const disc = B * B * m * m - A * (C * m * m - 1);
    if (disc < 0) continue;
    const mid = (-B * m) / A;
    const half = Math.sqrt(disc) / A;
    l = l * 0.45 + (rnd() - 0.5) * jag;
    r = r * 0.45 + (rnd() - 0.5) * jag;
    const x0 = Math.round((cx + mid - half + l) / 4) * 4;
    const x1 = Math.max(x0 + 4, Math.round((cx + mid + half + r) / 4) * 4);
    d += `M${x0},${(cy + y).toFixed(1)}H${x1}v${step + 0.3}H${x0}Z`;
  }
  return d;
}

type Echo = [number, number, number, number, number];

const ECHOES: Echo[] = [
  [1025, 43, 22, 8, 10], [1098, 60, 28, 26, 40], [1130, 95, 45, 26, 55], [1165, 135, 45, 28, 50], [1200, 175, 42, 24, 48], [1230, 212, 22, 12, 60], [1075, 98, 12, 7, 0], [1180, 98, 14, 8, 40],
  [1314, 172, 12, 6, 30], [1338, 192, 8, 14, -20], [1314, 305, 14, 9, 40], [953, 403, 9, 14, 30], [895, 464, 7, 20, 0], [934, 498, 7, 13, -20], [930, 548, 6, 6, 0],
  [717, 580, 6, 20, 0], [714, 615, 12, 22, 0], [758, 540, 11, 11, 0], [762, 560, 12, 8, 20], [750, 580, 6, 5, 0], [778, 600, 7, 4, 0], [748, 606, 5, 5, 0],
  [845, 640, 15, 14, 0], [840, 668, 22, 9, 0], [848, 695, 10, 20, 10], [790, 697, 18, 5, 10], [820, 742, 18, 7, 0], [752, 686, 7, 4, 0],
  [1135, 570, 26, 9, 20], [1155, 572, 8, 12, 30], [1084, 655, 13, 34, -5], [1105, 655, 12, 8, 0], [1068, 712, 10, 16, 20], [1055, 745, 10, 22, 25], [1025, 802, 16, 13, 20],
  [950, 835, 15, 7, -30], [935, 874, 7, 9, 0], [966, 902, 24, 23, 0], [1000, 892, 24, 9, -10], [950, 938, 13, 20, 10], [1015, 932, 6, 5, 0],
  [1148, 818, 18, 11, 0], [1130, 845, 14, 12, 30], [1120, 878, 10, 14, 20], [1111, 812, 5, 9, 0], [1145, 926, 12, 7, -30], [1350, 905, 11, 11, 30], [1340, 922, 11, 5, 0],
  [1413, 550, 16, 16, 20], [1465, 602, 15, 9, 20], [1492, 625, 9, 16, -20], [1495, 674, 14, 6, 10], [1474, 437, 4, 6, 0], [1488, 512, 8, 6, 0], [1388, 345, 18, 10, 50], [1416, 378, 5, 4, 0],
  [1452, 1006, 11, 10, 0], [1505, 1008, 16, 8, 40], [1190, 1066, 8, 7, 0], [1150, 1170, 14, 5, 0], [1098, 1118, 5, 5, 0], [1020, 1214, 5, 4, 0], [966, 1074, 6, 15, 20],
  [924, 1140, 7, 26, 0], [955, 1137, 10, 6, 0], [828, 1138, 6, 16, -10], [904, 1240, 6, 16, -10], [822, 1232, 6, 13, 30], [842, 1270, 16, 16, 10], [858, 1302, 7, 17, -20], [880, 1302, 7, 13, 0],
  [957, 1272, 12, 32, 0], [978, 1260, 7, 28, 0], [956, 1320, 10, 26, 0], [902, 1302, 9, 20, 0], [910, 1345, 15, 32, 0], [918, 1392, 12, 32, -10], [930, 1415, 10, 12, 0], [988, 1310, 8, 16, 20],
  [1035, 1292, 7, 20, 20], [1088, 1318, 12, 7, 10], [1092, 1380, 20, 7, -40], [1078, 1398, 14, 7, -30], [1062, 1418, 8, 12, 10], [1147, 1450, 10, 14, 0], [1122, 1476, 9, 14, 20], [1096, 1512, 24, 12, -25], [1074, 1532, 14, 7, -20], [1150, 1537, 28, 12, 0], [1200, 1532, 14, 13, 0],
  [1338, 1272, 10, 8, 0], [1360, 1270, 7, 5, 0], [1403, 1288, 20, 11, 20], [1418, 1308, 12, 12, 30], [1434, 1256, 12, 7, 0], [1448, 1384, 20, 9, -20], [1463, 1402, 13, 24, 0], [1482, 1420, 7, 8, 0], [1432, 1322, 6, 8, 0],
  [424, 1180, 10, 16, 0], [443, 1217, 7, 7, 0], [502, 1226, 16, 9, 0], [516, 1246, 20, 13, 0], [640, 1272, 20, 8, 0], [680, 1278, 30, 11, 20], [702, 1296, 13, 9, 0], [454, 1370, 10, 14, 10], [458, 1392, 8, 8, 0], [505, 1394, 22, 10, 30], [474, 1412, 7, 4, 0],
  [582, 1442, 26, 13, 15], [608, 1456, 28, 12, 20], [634, 1466, 18, 12, 10], [140, 1421, 18, 7, 0], [369, 970, 5, 9, 0], [340, 1046, 8, 18, 15], [368, 1046, 18, 9, -30], [988, 1546, 20, 5, 0],
  [1380, 60, 30, 36, 20], [1400, 110, 36, 30, 50], [1405, 165, 36, 22, 60], [1392, 215, 16, 36, -10], [1385, 262, 14, 22, -20], [1430, 215, 60, 22, 58], [1455, 270, 60, 22, 40], [1440, 285, 40, 14, 20],
  [1470, 120, 26, 46, -25], [1500, 150, 26, 55, -25], [1510, 110, 22, 20, 0], [1535, 200, 14, 40, -10], [1500, 220, 30, 60, -30], [1480, 190, 20, 50, -30], [1520, 290, 30, 70, -5],
  [1490, 310, 36, 40, -20], [1520, 370, 30, 50, -5], [1538, 430, 13, 48, 0], [1540, 480, 9, 30, 0], [1535, 50, 10, 14, 0], [1530, 130, 14, 10, 20], [1410, 45, 18, 10, 0],
];

const HOLES: Echo[] = [
  [1450, 172, 34, 9, 58], [1480, 215, 34, 8, 50], [1410, 232, 30, 7, 48], [1450, 268, 30, 6, 55], [1408, 268, 16, 8, 40], [1516, 185, 34, 6, 62], [1495, 300, 30, 6, 58], [1535, 262, 12, 4, 60],
  [1430, 130, 12, 22, -20], [1462, 238, 20, 4, 50], [1440, 205, 22, 4, 55], [1540, 230, 18, 3, 60],
];

const DOTS: Pt[] = [
  [241, 662], [67, 783], [917, 497], [961, 521], [898, 547], [939, 568], [1032, 494], [1078, 523], [1035, 556], [1083, 619], [1020, 632], [768, 615], [759, 659], [794, 694], [743, 731], [784, 737], [907, 692], [963, 694], [1013, 692], [945, 739], [945, 780], [1048, 739], [1083, 777],
  [722, 795], [693, 822], [722, 825], [757, 837], [814, 816], [857, 795], [718, 863], [748, 899], [862, 872], [932, 843], [994, 852], [1057, 849], [930, 887], [844, 928], [765, 960], [808, 958], [871, 999], [948, 976], [970, 1021], [906, 1058], [901, 1167],
  [1280, 512], [1370, 533], [1255, 763], [1190, 855], [1329, 834], [1222, 935], [1170, 982], [1363, 923], [1506, 734], [530, 1067], [708, 1065], [610, 1112], [539, 1173], [699, 1170], [754, 1162], [887, 1233], [779, 1277], [1185, 1307], [506, 1234], [645, 1281], [712, 1296],
  [536, 1362], [323, 1384], [391, 1443], [544, 1455], [968, 1525], [766, 1004], [1232, 213],
];

const COAST =
  "46,1575 58,1545 64,1512 72,1490 90,1478 115,1462 140,1445 185,1434 225,1415 245,1398 268,1378 273,1347 293,1352 281,1318 287,1290 282,1262 288,1240 281,1210 283,1180 285,1158 305,1140 340,1120 400,1106 425,1100 452,1078 480,1055 515,1030 550,1016 590,1003 612,1022 645,1008 672,1015 688,1005 684,992 665,985 655,968 640,960 664,946 680,938 700,925 678,912 655,885 650,840 672,815 692,788 715,745 730,705 738,655 742,610 752,568 768,566 775,582 800,570 815,600 818,622 835,632 850,660 852,600 885,600 852,582 856,548 852,527 862,492 880,470 905,450 945,435 990,437 1040,422 1072,424 1082,456 1108,462 1112,478 1125,482 1130,462 1152,460 1124,456 1101,456 1104,430 1100,404 1118,402 1110,385 1130,362 1150,354 1170,356 1200,350 1248,347 1252,370 1268,385 1256,404 1264,420 1276,422 1285,433 1292,405 1282,382 1300,378 1322,392 1328,370 1320,350 1325,315 1345,297 1360,312 1400,308 1440,300 1405,294 1390,286 1382,266 1366,256 1388,240 1385,222 1370,200 1372,185 1392,176 1375,158 1395,130 1375,96 1360,75 1365,62 1348,15 1575,15 1575,1575";

const NL =
  "752,568 768,566 775,582 800,570 852,527 862,492 880,470 905,450 945,435 990,437 1040,422 1072,424 1082,456 1108,462 1112,478 1125,482 1122,560 1118,575 1105,590 1102,655 1055,658 1050,690 1060,705 1078,708 1100,722 1102,740 1095,780 1064,804 1050,805 1055,830 1067,855 1045,866 1020,880 990,882 960,880 935,890 945,905 950,935 965,965 972,1010 962,1040 958,1090 930,1115 955,1130 953,1160 945,1192 905,1190 892,1172 912,1142 915,1080 890,1065 880,1052 855,1045 815,1038 805,1010 800,990 785,1010 765,984 755,998 730,990 708,992 700,1010 685,1018 688,1005 684,992 665,985 655,968 640,960 664,946 680,938 700,925 678,912 655,885 650,840 672,815 692,788 715,745 730,705 738,655 742,610";

const FRANCE =
  "46,1575 58,1545 64,1512 72,1490 90,1478 115,1462 140,1445 185,1434 225,1415 245,1398 268,1378 273,1347 293,1352 281,1318 287,1290 282,1262 288,1240 281,1210 283,1180 285,1158 305,1140 340,1120 400,1106 425,1100 432,1118 440,1138 435,1165 450,1190 470,1206 488,1200 495,1188 518,1188 530,1212 528,1240 540,1262 562,1265 590,1275 592,1300 605,1320 630,1312 655,1316 672,1338 665,1358 676,1380 668,1414 690,1420 715,1427 740,1418 756,1400 768,1372 764,1415 775,1465 798,1478 812,1500 830,1500 845,1525 860,1536 862,1575";

const ENGLAND =
  "20,583 52,588 60,583 70,588 82,605 100,615 108,585 118,565 150,556 190,562 240,572 270,590 298,622 308,655 306,680 312,695 303,725 290,770 288,800 275,818 245,850 220,832 240,856 206,851 238,858 238,884 210,900 190,883 192,900 170,915 152,914 187,920 188,950 160,975 118,978 108,992 150,988 185,1000 192,1018 263,1012 258,1080 232,1098 210,1105 190,1145 170,1142 150,1162 100,1178 85,1193 20,1182";

function RadarMap() {
  const sea = "fill-[#000086]";
  const coast = "stroke-[#d4e64a]";
  return (
    <Card className="relative h-[687px]">
      <svg viewBox="46 37 1501 1514" preserveAspectRatio="none" className="block size-full" strokeLinejoin="round">
        <defs>
          <filter id="wobble" filterUnits="userSpaceOnUse" x="0" y="0" width="1600" height="1600" colorInterpolationFilters="sRGB">
            <feTurbulence type="fractalNoise" baseFrequency="0.045" numOctaves="2" seed="4" result="n" />
            <feDisplacementMap in="SourceGraphic" in2="n" scale="15" xChannelSelector="R" yChannelSelector="G" />
          </filter>
        </defs>
        <rect x="46" y="37" width="1501" height="1514" className={sea} />
        <g filter="url(#wobble)">
          <g className={`${coast} fill-[#007c00]`} strokeWidth="2.6">
            <polygon points="30,315 50,345 66,365 67,388 54,372 30,368" />
            <polygon points="30,398 60,408 78,430 90,462 98,495 96,524 70,552 40,583 30,583" />
            <polygon points={ENGLAND} />
            <polygon points="130,1000 155,998 175,1014 150,1010" />
          </g>
          <polygon points={COAST} className={`${coast} fill-[#00ab00]`} strokeWidth="2.6" />
          <g className={`${coast} fill-[#007c00]`} strokeWidth="2.4">
            <polygon points={FRANCE} />
            <polygon points={NL} />
            <polygon points="550,1018 590,1008 615,1024 650,1012 678,1018 670,1035 645,1060 600,1052 575,1045 565,1056 552,1048" />
            <polygon points="563,968 575,955 610,948 650,966 660,985 645,988 625,1006 600,1000 575,985" />
            <polygon points="600,918 625,908 650,915 672,936 655,944 630,928 608,930" />
            <polygon points="625,890 640,882 655,890 640,900" />
            <polygon points="758,548 758,525 775,498 782,520 768,545" />
            <polygon points="780,488 785,472 800,462 812,465 795,475 785,490" />
            <polygon points="822,448 835,438 880,427 850,440" />
            <polygon points="892,424 892,418 938,419 920,424" />
            <polygon points="965,418 978,407 998,407 985,412" />
            <polygon points="1045,385 1050,378 1066,380 1056,388" />
            <polygon points="1080,358 1108,355 1095,360" />
            <polygon points="1120,350 1130,344 1160,346 1145,350" />
            <polygon points="1168,346 1170,338 1190,334 1182,342" />
            <polygon points="1196,333 1212,330 1218,334" />
            <polygon points="1224,328 1240,325 1236,330" />
            <polygon points="1264,344 1276,342 1270,348" />
          </g>
          <g className={`${coast} fill-[#00ab00]`} strokeWidth="2.4">
            <path d="M1306,60L1315,52L1334,54L1330,70L1310,68Z M1298,65L1291,74L1303,88M1290,37V55" />
            <polygon points="1336,118 1348,108 1350,120 1342,126" />
            <polygon points="1368,124 1380,115 1388,128 1376,134" />
            <polygon points="1340,160 1352,150 1378,154 1384,176 1362,184 1345,188 1340,172" />
          </g>
          <g className={`${sea} ${coast}`} strokeWidth="2.4">
            <polygon points="800,570 852,530 856,560 852,585 890,600 885,628 895,655 918,662 885,672 865,690 858,668 838,628 820,622 815,600" />
            <polygon points="804,655 832,655 862,682 840,712 820,732 835,746 806,740 801,722 808,690" />
          </g>
          <g className={sea}>
            <polygon points="650,908 675,925 712,921 690,912 660,890" />
            <polygon points="580,1000 630,1004 682,992 684,1006 620,1012" />
            <polygon points="640,950 668,975 686,985 670,990 640,968" />
            <polygon points="968,440 985,442 982,452 970,454" />
            <polygon points="868,574 888,562 884,570 870,578" />
            <polygon points="908,575 922,572 922,584 912,585" />
            <polygon points="1438,700 1448,692 1454,698 1444,708" />
            <polygon points="1528,132 1547,124 1547,130" />
          </g>
          <polygon points="820,735 865,690 890,672 920,670 927,695 910,722 885,735 870,762 845,752" className={`${coast} fill-[#007c00]`} strokeWidth="3" />
          <g className="fill-none stroke-[#a4d811]" strokeWidth="2.4">
            <path d="M852,527L830,545L800,570" className={coast} strokeWidth="5" />
            <path d="M990,437L986,465L980,490L975,518L995,525L1008,570L980,590L965,600L945,600L920,604L890,598M995,525L1015,500L1030,492L1040,515L1060,525L1075,545L1100,575L1105,590" />
            <path d="M965,600L970,625L968,640L985,650L1010,660L1030,658L1048,645L1055,658M918,604L935,625L942,655L918,662M888,605L885,640L900,662L925,668M925,670L930,700L955,695L958,725L968,742L965,770L1000,772L1022,788L1050,800" />
            <path d="M730,745L728,772L745,778L765,772L770,800L775,820L768,845L790,842L830,848L860,840L885,848L878,818L862,790L858,758L830,762L825,785L805,785L800,762L775,760L765,772M740,745L770,748L800,740" />
            <path d="M885,848L860,852L822,848L818,870L798,885L775,888L760,905L720,915L700,925M798,885L820,895L812,912L850,900L875,885L900,895L925,890L935,905L950,915M925,962L935,990L930,1020L900,1030L890,1055M948,965L928,962L925,1000" />
            <path d="M945,1192L965,1200L975,1225L985,1240L982,1270L1000,1290L988,1325L965,1330L960,1360L968,1400L990,1440L1020,1466L1015,1500L1000,1525L1002,1560M960,1362L940,1360L930,1385L905,1425L915,1460L912,1490L928,1520L918,1560" />
            <path d="M862,1538L875,1545L918,1540M1322,392L1321,445" className="stroke-[#d8ea10]" strokeWidth="3.5" />
          </g>
          <g className="fill-none stroke-[#024a2f]" strokeWidth="2.6">
            <path d="M1152,462L1158,490L1142,515L1145,560L1135,600L1142,660L1148,740L1170,775L1190,800L1200,825L1225,845L1265,850L1290,865L1310,895L1345,888L1360,872" />
            <path d="M1320,445L1322,490L1350,520L1400,550L1425,575L1422,650L1410,700L1390,740L1375,775L1410,785L1450,815L1465,870L1458,930L1475,960L1485,1010L1475,1060L1458,1085L1400,1068L1370,1095L1330,1105L1290,1108L1276,1132" />
            <path d="M1425,575L1460,600L1500,635L1560,648M1485,640L1470,690L1505,735L1510,790L1535,870L1532,960L1538,1010L1560,1040" />
            <path d="M1030,935L1080,932L1130,912L1170,930L1210,940L1250,925L1290,935L1330,918L1352,895M1340,920L1348,940L1332,960L1362,975M1058,990L1100,1012L1150,995L1200,990L1230,980L1260,1010L1318,1018L1320,1062" />
            <path d="M1095,700L1130,740L1150,790L1145,835L1110,855L1060,815M1190,1318L1240,1305L1285,1268L1345,1245L1370,1162L1395,1200L1405,1235L1440,1250" />
            <path d="M1230,1415L1290,1405L1330,1385L1375,1370L1400,1410L1420,1455L1440,1490L1460,1470L1485,1460L1498,1400L1520,1440L1560,1500M1230,1418L1220,1470L1180,1515M1185,1312L1155,1345L1120,1375L1110,1420L1070,1465L1030,1490L1035,1560" />
            <path d="M695,1088L735,1120L800,1118L818,1145L780,1190L773,1225M875,1447L900,1438L930,1445L975,1442" />
            <path d="M293,1352L330,1390L390,1435L440,1440L485,1420L495,1460L520,1478L555,1460L550,1500L495,1535L490,1560M555,1445L620,1425L690,1440L740,1420" />
            <path d="M100,615L100,660L75,700L40,745M145,1547L155,1541L162,1549M670,1547L684,1538L692,1546" />
          </g>
          <g className="fill-none stroke-[#02346a]" strokeWidth="3.4">
            <path d="M1005,900L1015,930L1040,940L1050,985L1052,1050L1075,1100L1090,1140L1110,1195L1140,1265L1185,1305L1200,1365L1230,1415L1280,1395L1300,1430L1305,1500L1315,1560" />
            <path d="M685,1018L705,1050L695,1085L680,1108L610,1118L590,1165L552,1210L560,1265L582,1275L570,1310L545,1330L528,1372L535,1410" />
            <path d="M905,1192L885,1230L850,1245L815,1270L780,1275L785,1320L770,1365L745,1415L760,1450L765,1490L800,1495L822,1560" />
            <path d="M972,1010L955,1060L925,1100M965,965L950,935M40,980L75,982L108,992M862,868L900,866L940,880L1005,900" />
          </g>
          <g className="fill-none stroke-[#02345a]" strokeWidth="2.6">
            <path d="M655,840L690,862L750,868L790,852L820,850M750,915L805,918L815,905M658,885L700,918L750,912M800,885L860,886L880,866M950,655L965,682L1040,686L1055,660M975,772L972,825L945,850M975,785L1030,790" />
          </g>
        </g>
        <g className="fill-white opacity-[0.61]">
          {ECHOES.map(([x, y, rx, ry, r], i) => (
            <path key={i} d={echo(x, y, rx, ry, r, i + 3)} />
          ))}
        </g>
        <g className="fill-[#00ab00]">
          {HOLES.map(([x, y, rx, ry, r], i) => (
            <path key={i} d={echo(x, y, rx, ry, r, i + 71)} />
          ))}
        </g>
        <path d="M1350,37L1363,62L1360,75L1375,98L1393,130L1377,156L1392,176L1372,186L1372,202L1385,222L1388,242L1368,256L1382,268L1390,286L1405,294L1442,300L1458,318L1475,350L1490,385L1520,395" className="fill-none stroke-[#d8d8b8]" strokeWidth="3" filter="url(#wobble)" />
        <g className="fill-[#b4ee1e]">
          {DOTS.map(([x, y]) => (
            <rect key={`${x}-${y}`} x={x - 4.5} y={y - 4} width="9" height="8" rx="2" />
          ))}
        </g>
      </svg>
      <div className="absolute left-[27px] top-[25px] whitespace-nowrap font-['Inter'] text-[32.8px] font-bold leading-[38px] text-white [text-shadow:2px_2px_1px_#000]">
        zo 23:45
      </div>
    </Card>
  );
}

function RainChart() {
  const times = ["23:45", "23:55", "00:05", "00:15", "00:25", "00:35", "00:45", "00:55", "01:05", "01:15", "01:25", "01:35", "01:45", "01:55"];
  const tags: [string, number, number, number][] = [["Zwaar", 1404, 267, 46], ["Matig", 1410, 347.5, 40.5], ["Licht", 1414, 404, 36.5]];
  return (
    <svg viewBox="773 190 736 390" className="mt-auto block h-[390px] w-full font-['Liberation_Sans',sans-serif]">
      <g className="fill-[#9a9a9a] text-[18px]" textAnchor="middle">
        {[6, 5, 4, 3, 2, 1, 0].map((n, i) => (
          <text key={n} x="839.5" y={233.8 + i * 37.3}>{n}</text>
        ))}
      </g>
      {[265.4, 377.1, 437].map((y) => (
        <line key={y} x1="862" x2="1463.5" y1={y} y2={y} className="stroke-[#777]" strokeWidth="1.6" />
      ))}
      <line x1="861.5" x2="1464" y1="451.7" y2="451.7" className="stroke-[#149fe2]" strokeWidth="3.4" />
      {tags.map(([t, x, y, w]) => (
        <g key={t}>
          <rect x={x} y={y} width={1459.5 - x} height="26.6" rx="7" className="fill-[#050505]" />
          <text x="1455" y={y + 18} textAnchor="end" textLength={w} className="fill-white text-[15.5px] font-bold">{t}</text>
        </g>
      ))}
      <g className="fill-[#9a9a9a] text-[18px]" textAnchor="end">
        {times.map((t, i) => (
          <text key={t} transform={`translate(${873.5 + i * 46.3} 480) rotate(-48)`}>{t}</text>
        ))}
      </g>
      <text x="1163" y="544.5" textAnchor="middle" textLength="182" className="fill-[#e1e1e1] text-[18px]">Regenval voorspelling</text>
      <text transform="translate(819 340) rotate(-90)" textAnchor="middle" textLength="145" className="fill-[#e1e1e1] text-[18px]">Regen (mm / uur)</text>
    </svg>
  );
}

function Pair({ label, time, big }: { label: string; time: string; big?: boolean }) {
  return (
    <div className="text-center">
      <p className={big ? "text-[25px] leading-[31px] text-[#9b9b9b]" : "text-[21px] leading-[28px] text-[#9b9b9b]"}>{label}</p>
      <p className={big ? "text-[30px] leading-[30px] text-[#e1e1e1]" : "text-[25px] leading-[29px] text-[#e1e1e1]"}>{time}</p>
    </div>
  );
}

function SunCard() {
  return (
    <Card className="flex h-[412px] flex-col">
      <div className="mt-[33px] flex justify-around pl-[9px] pr-[10px]">
        <Pair big label="Zonsopkomst" time="08:04" />
        <Pair big label="Zonsondergang" time="17:44" />
      </div>
      <svg viewBox="7 340 1539 600" preserveAspectRatio="none" className="mt-[15px] block h-[200px] w-full">
        <defs>
          <clipPath id="sunclip"><rect x="1300" y="800" width="220" height="109" /></clipPath>
        </defs>
        <path d="M64,657V898C220,897 330,775 485,657Z" className="fill-[#3b3a79]" />
        <path d="M485,657C590,567 680,522 777,522C880,522 960,568 1066,657Z" className="fill-[#8dbceb]" />
        <path d="M1066,657C1220,790 1320,860 1430,893V657Z" className="fill-[#3b3a79]" />
        <g className="fill-none stroke-[#55555a]" strokeWidth="1.6">
          <path d="M485,350V610M1067,350V610M64,657H1490M1462,638L1490,657L1462,677M1475,897H1490" vectorEffect="non-scaling-stroke" />
        </g>
        <ellipse cx="1262" cy="857" rx="37" ry="52" className="fill-[#292929]" />
        <ellipse cx="1260" cy="832" rx="12" ry="18" className="fill-[#3b3b3b]" />
        <ellipse cx="1250" cy="862" rx="9" ry="13" className="fill-[#3a3a3a]" />
        <ellipse cx="1279" cy="862" rx="9" ry="15" className="fill-[#373737]" />
        <ellipse cx="1280" cy="838" rx="7" ry="11" className="fill-[#373737]" />
        <path d="M1296,845C1302,868 1290,904 1256,908C1284,900 1297,872 1296,845Z" className="fill-[#bdbba6]" />
        <ellipse cx="1430" cy="890" rx="45" ry="64" className="fill-[#c18f5d]" clipPath="url(#sunclip)" />
      </svg>
      <div className="mt-[20px] flex justify-around px-[9.5px]">
        <Pair label="Dageraad" time="07:28" />
        <Pair label="Middaguur" time="12:54" />
        <Pair label="Schemer" time="18:19" />
      </div>
    </Card>
  );
}

function WindCard() {
  return (
    <Card className="flex h-[360px] flex-col pt-[24px]">
      <div className="flex h-9 items-center justify-between pl-[23.5px] pr-6">
        <span className="text-[24px] font-medium leading-9 text-[#9b9b9b]">Wind</span>
        <Icon d={I.compass} className="text-[#44739e]" />
      </div>
      <svg viewBox="1148 1450 361 295" className="mt-auto block h-[295px] w-full">
        <defs>
          <linearGradient id="arrow" x1="0" x2="0" y1="0" y2="1">
            <stop offset="0.55" stopColor="#ffc470" />
            <stop offset="0.62" stopColor="#ff9a0a" />
          </linearGradient>
        </defs>
        <circle cx="1328.3" cy="1588" r="92.8" className="fill-none stroke-[#0ea1e4]" strokeWidth="3" />
        <g className="fill-[#0ea1e4] text-[21px]" textAnchor="middle">
          <text x="1328" y="1491">N</text>
          <text x="1328" y="1701">Z</text>
          <text x="1432" y="1596">O</text>
          <text x="1219" y="1596">W</text>
        </g>
        <path d="M1215.7,1568L1260.5,1582.7L1215.2,1592L1225.8,1580.7Z" fill="url(#arrow)" />
        <text x="1327.5" y="1544" textAnchor="middle" className="fill-[#9b9b9b] text-[24px]">W</text>
        <text x="1265" y="1603" className="fill-[#e1e1e1] text-[40px]">6.1</text>
        <text x="1328.5" y="1603" className="fill-[#8f8f8f] text-[27px]">km/h</text>
        <text x="1296.5" y="1652" className="fill-[#e1e1e1] text-[40px]">2</text>
        <text x="1325" y="1652" className="fill-[#8f8f8f] text-[27px]">Bft</text>
      </svg>
    </Card>
  );
}

function Heading({ children }: { children: React.ReactNode }) {
  return <h2 className="pl-[23.5px] pt-[31px] text-[36px] leading-[48px] tracking-[-0.012em] text-[#e1e1e1]">{children}</h2>;
}

function Glance({ items }: { items: [React.ReactNode, string, string?][] }) {
  return (
    <div className="mt-[61px] grid grid-cols-3 gap-y-[33px] pl-[23.5px] pr-[24.5px]">
      {items.map(([icon, label, extra]) => (
        <div key={label} className="flex h-[99px] flex-col items-center">
          <div className="text-[#44739e]">{icon}</div>
          <span className={`mt-[22px] whitespace-nowrap text-[21px] leading-[32px] text-[#e1e1e1] ${extra ?? ""}`}>{label}</span>
        </div>
      ))}
    </div>
  );
}

export default function App() {
  const hours: [string, string, string][] = [["23:00", "moon", "6,3°"], ["00:00", "partly", "6,1°"], ["01:00", "partly", "5,9°"], ["02:00", "partly", "5,7°"], ["03:00", "moon", "5,5°"]];
  const days: [string, string, string, string][] = [["zo", "sun", "6,3°", "5,2°"], ["ma", "partly", "8,9°", "3,4°"], ["di", "cloudy", "9°", "6,3°"], ["wo", "rain", "11,3°", "10,4°"], ["do", "rain", "13,8°", "9,9°"]];
  return (
    <div className="h-[1757px] w-[2272px] overflow-hidden bg-[#111111] font-['Roboto',sans-serif]">
      <Tabs />
      <main className="flex gap-3 pl-[22px] pt-3">
        <section className="flex w-[738px] flex-col gap-3">
          <Card className="h-[196px] pl-[23.5px] pr-6 pt-[25px]">
            <div className="flex h-9 items-center justify-between">
              <span className="text-[24px] font-medium text-[#9b9b9b]">Voorspelling</span>
              <Icon d={I.text} className="text-[#44739e]" />
            </div>
            <p className="mt-2 text-[42px] leading-[49px] text-[#e1e1e1]">Enkele buien. Morgen vooral in het westen perioden met zon</p>
          </Card>
          <RadarMap />
          <div className="grid grid-cols-2 gap-3">
            <Sensor {...sensors.temp} />
            <Sensor {...sensors.feels} />
            <Sensor {...sensors.ground} />
            <Sensor {...sensors.pressure} />
          </div>
        </section>
        <section className="flex w-[738px] flex-col gap-3">
          <Card className="flex h-[483px] flex-col">
            <div className="flex items-start justify-between pr-[30px]">
              <Heading>Neerslag</Heading>
              <Icon d={I.rainy} className="mt-[45px] text-[#e1e1e1]" />
            </div>
            <RainChart />
          </Card>
          <SunCard />
          <div className="grid grid-cols-2 gap-3">
            <Sensor {...sensors.uv} />
            <Sensor {...sensors.rain} />
            <Sensor {...sensors.humid} />
            <WindCard />
          </div>
        </section>
        <section className="flex w-[738px] flex-col gap-3">
          <Card className="h-[332px]">
            <Heading>Weer per uur</Heading>
            <div className="mt-[83px] grid grid-cols-5 pl-[23.5px] pr-[24.5px] text-[#e1e1e1]">
              {hours.map(([t, k, v]) => (
                <div key={t} className="flex flex-col items-center">
                  <span className="text-[21px] leading-8">{t}</span>
                  <div className="mt-1"><Weather kind={k} /></div>
                  <span className="mt-[10px] text-[24px] leading-9">{v}</span>
                </div>
              ))}
            </div>
          </Card>
          <Card className="h-[362px]">
            <Heading>Weer per dag</Heading>
            <div className="mt-[83px] grid grid-cols-5 pl-[23.5px] pr-[24.5px] text-[#e1e1e1]">
              {days.map(([t, k, hi, lo]) => (
                <div key={t} className="flex flex-col items-center">
                  <span className="text-[21px] leading-8">{t}</span>
                  <div className="mt-1"><Weather kind={k} /></div>
                  <span className="mt-[10px] text-[24px] leading-9">{hi}</span>
                  <span className="text-[21px] leading-9 text-[#8c8c8c]">{lo}</span>
                </div>
              ))}
            </div>
          </Card>
          <Card className="h-[254px]">
            <Heading>Weerstation</Heading>
            <Glance items={[[<Icon d={I.thermo} />, "8,05 °C"], [<Icon d={I.waterPercent} />, "91,14%"], [<Icon d={I.gaugeRight} />, "996 hPa"]]} />
          </Card>
          <Card className="h-[518px]">
            <Heading>Meteorologie</Heading>
            <Glance
              items={[
                [<Snowflake />, "Winter"], [<Icon d={I.crescent} />, "Wassende, sikkelvor...", "mr-[14px]"], [<Icon d={I.sunny} />, "Onder de horizon"],
                [<Pollen />, "Laag"], [<Icon d={I.eye} />, "16,09 km"], [<Shirt />, "Jas"],
                [<Icon d={I.waterThermo} />, "8,3 °C"], [<Icon d={I.waterCircle} />, "501,0 cm"],
              ]}
            />
          </Card>
        </section>
      </main>
    </div>
  );
}
